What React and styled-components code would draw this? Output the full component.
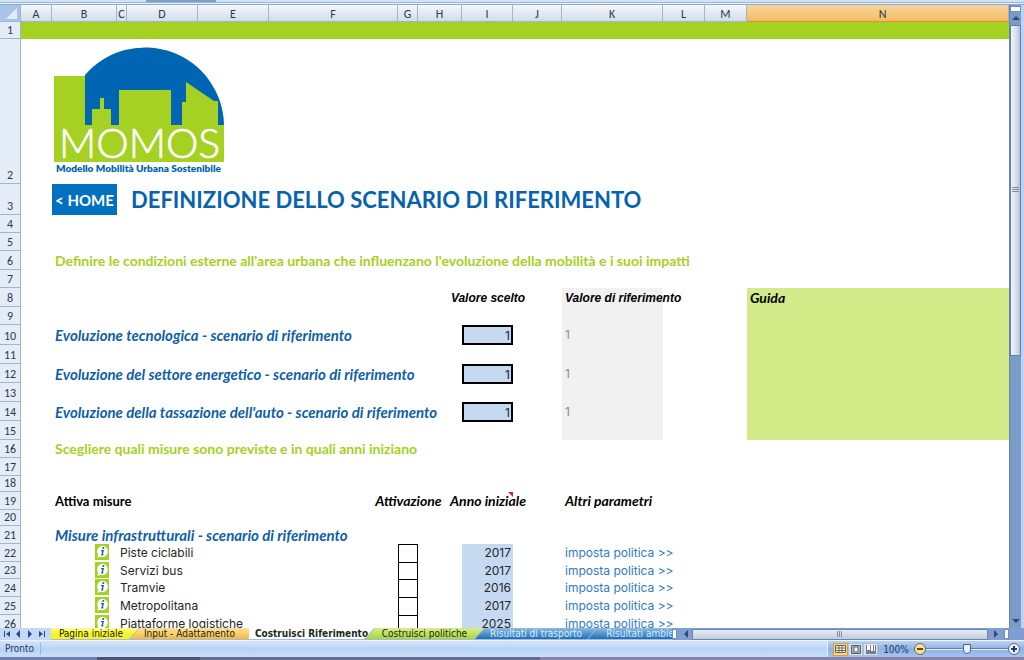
import React from "react";
import styled, { createGlobalStyle, css } from "styled-components";

const GlobalStyle = createGlobalStyle`
  *, *::before, *::after { box-sizing: border-box; }
  body { margin: 0; background: #fff; }
  button, input { font: inherit; margin: 0; padding: 0; border: 0; }
`;

const gothic = `"Century Gothic", Inter, sans-serif`;
const gothicBold = `"Century Gothic", Lato, sans-serif`;
const uiFont = `Tahoma, "DejaVu Sans Condensed", "Open Sans", sans-serif`;

const Window = styled.div`
  display: flex;
  flex-direction: column;
  height: 100vh;
  overflow: hidden;
  font-family: ${gothic};
`;

const RibbonEdge = styled.div`
  height: 5px;
  flex: none;
  padding-left: 146px;
  background: linear-gradient(#d3e3f6 0 2px, #9fb6d2 2px 3px, #e9f1fb 3px 4px, #8ea9ca 4px 5px);
`;

const RibbonMark = styled.div`
  width: 70px;
  height: 2px;
  background: #7d9fce;
`;

const Workspace = styled.main`
  display: flex;
  flex: 1;
  min-height: 0;
`;

const SheetArea = styled.div`
  flex: 1;
  min-width: 0;
  overflow: hidden;
`;

const Sheet = styled.table`
  width: 100%;
  table-layout: fixed;
  border-collapse: separate;
  border-spacing: 0;
`;

const headingFont = css`
  font-family: Calibri, Lato, sans-serif;
  font-size: 12px;
  font-weight: 400;
  color: #2c3a4c;
  line-height: 14px;
`;

const ColumnHeading = styled.th`
  ${headingFont}
  height: 17px;
  padding: 2px 0 0 ${(p) => (p.$selected ? "10px" : "0")};
  border-right: 1px solid #9eb6ce;
  border-bottom: 1px solid ${(p) => (p.$selected ? "#e0913c" : "#9eb6ce")};
  background: ${(p) =>
    p.$selected ? "linear-gradient(#f9d49c, #f1bd62)" : "linear-gradient(#f5f8fc, #d3dce9)"};
`;

const Corner = styled.td`
  height: 17px;
  padding: 1px;
  border-right: 1px solid #9eb6ce;
  border-bottom: 1px solid #9eb6ce;
  background: #a9c4e9;
  svg { display: block; margin-left: auto; }
`;

const RowHeading = styled.th`
  ${headingFont}
  height: ${(p) => p.$height}px;
  padding: 0 0 1px;
  vertical-align: bottom;
  border-right: 1px solid #9eb6ce;
  border-bottom: 1px solid #9eb6ce;
  background: #e4ecf7;
`;

const fills = { lime: "#a5d122", guide: "#d3eb89", grey: "#f1f1f1", blue: "#c5d9f1" };

const Cell = styled.td`
  position: relative;
  padding: 0;
  vertical-align: top;
  background: ${(p) => fills[p.$fill] || "transparent"};
`;

const tones = {
  body: css`font-size: 12px; color: #262626;`,
  link: css`font-size: 12px; color: #2f7bc6;`,
  faint: css`font-size: 12px; color: #8c8c8c;`,
  title: css`padding-left: 4px; font-family: ${gothicBold}; font-size: 22px; font-weight: 700; color: #0563af;`,
  lime: css`font-family: ${gothicBold}; font-size: 14px; font-weight: 700; color: #a5d122;`,
  topic: css`font-family: ${gothicBold}; font-size: 15px; font-weight: 700; font-style: italic; color: #0f5fa8;`,
  head: css`font-family: ${gothicBold}; font-size: 14px; font-weight: 700; font-style: italic; color: #000;`,
  headPlain: css`font-family: ${gothicBold}; font-size: 13px; font-weight: 700; color: #000;`,
  arial: css`font-family: "Liberation Sans", Arial, sans-serif; font-size: 12px; font-weight: 700; font-style: italic; color: #000;`,
};

const Content = styled.div`
  display: flex;
  align-items: center;
  justify-content: ${(p) => p.$align || "flex-start"};
  height: ${(p) => p.$height}px;
  padding: 0 2px 0 3px;
  line-height: 16px;
  white-space: nowrap;
  ${(p) => tones[p.$tone]}
`;

const PolicyLink = styled.a`
  color: inherit;
  text-decoration: none;
`;

const HomeLink = styled.a`
  display: flex;
  align-items: center;
  justify-content: center;
  height: 31px;
  background: #0070c0;
  color: #fff;
  font-family: ${gothicBold};
  font-size: 15px;
  font-weight: 700;
  white-space: nowrap;
  text-decoration: none;
`;

const ValueInput = styled.input`
  display: block;
  width: 100%;
  height: 20px;
  margin-bottom: -1px;
  padding-right: 1px;
  border: 2px solid #000;
  border-radius: 0;
  background: #c5d9f1;
  color: #1c2430;
  font-size: 12px;
  text-align: right;
`;

const YearInput = styled.input`
  width: 100%;
  background: transparent;
  color: #262626;
  text-align: right;
`;

const Tick = styled.input`
  appearance: none;
  display: block;
  width: 100%;
  height: 18px;
  margin-bottom: -1px;
  border: 1px solid #000;
  border-bottom: 0;
  border-radius: 0;
  background: #fff;
`;

const InfoButton = styled.button`
  display: block;
  width: 14px;
  height: 16px;
  margin-left: 43px;
  background: #a5d122;
  svg { display: block; }
`;

const NoteMark = styled.span`
  position: absolute;
  top: 0;
  right: 0;
  width: 5px;
  height: 5px;
  background: #e02020;
  clip-path: polygon(0 0, 100% 0, 100% 100%);
`;

const LogoFrame = styled.div`
  padding: 7px 0 0 2px;
  svg { display: block; }
`;

const VerticalBar = styled.div`
  display: flex;
  flex-direction: column;
  flex: none;
  width: 15px;
  padding: 1px 0 0;
  border-left: 1px solid #6786b3;
  border-right: 3px solid #bdd3f3;
  background: #7b9bc9;
`;

const Splitter = styled.div`
  flex: none;
  width: ${(p) => (p.$upright ? "5px" : "auto")};
  height: ${(p) => (p.$upright ? "10px" : "6px")};
  border: 1px solid #6f8fbd;
  background: #fff;
`;

const ArrowButton = styled.button`
  display: flex;
  align-items: center;
  justify-content: center;
  flex: none;
  width: ${(p) => p.$width || 11}px;
  height: ${(p) => p.$height || 12}px;
  background: transparent;
`;

const VerticalThumb = styled.div`
  display: flex;
  align-items: center;
  justify-content: center;
  flex: 330 1 0;
  border: 1px solid #5f7fae;
  background: linear-gradient(90deg, #f0f4fa, #dbe3ef 50%, #b6c3d8);
`;

const VerticalTrack = styled.div`
  flex: 259 1 0;
`;

const BottomBar = styled.div`
  display: flex;
  align-items: center;
  flex: none;
  height: 12px;
  padding-right: 15px;
  background: #7f9fce;
`;

const TabArea = styled.div`
  display: flex;
  flex: 675 1 0;
  min-width: 0;
  height: 12px;
  overflow: hidden;
  background: #9dbbe6;
`;

const TabArrows = styled.div`
  display: flex;
  flex: none;
  justify-content: space-between;
  width: 51px;
  padding: 0 4px 0 2px;
  background: #c3d9f6;
`;

const tabShapes = {
  first: "polygon(0 0, 100% 0, calc(100% - 10px) 100%, 0 100%)",
  beforeActive: "polygon(10px 0, 100% 0, 100% 100%, 0 100%)",
  middle: "polygon(10px 0, 100% 0, calc(100% - 10px) 100%, 0 100%)",
};

const Tab = styled.button`
  flex: none;
  width: ${(p) => p.$width}px;
  height: 11px;
  margin-left: ${(p) => (p.$shape === "first" ? 0 : -9)}px;
  padding-right: ${(p) => (p.$shape === "first" && !p.$active ? 8 : 0)}px;
  background: ${(p) => p.$fill};
  color: ${(p) => p.$color || "#1d2a16"};
  font-family: ${uiFont};
  font-size: 10px;
  font-weight: ${(p) => (p.$active ? 700 : 400)};
  line-height: 11px;
  white-space: nowrap;
  clip-path: ${(p) => tabShapes[p.$shape]};
`;

const HorizontalBar = styled.div`
  display: flex;
  align-items: center;
  flex: 329 1 0;
  height: 12px;
  padding-left: 4px;
`;

const HorizontalThumb = styled.div`
  display: flex;
  align-items: center;
  justify-content: center;
  flex: 1;
  height: 11px;
  border: 1px solid #6a86b0;
  background: linear-gradient(#e7edf6, #c0cbdc);
`;

const StatusBar = styled.footer`
  display: flex;
  align-items: center;
  flex: none;
  height: 17px;
  border-top: 1px solid #eef5fe;
  background: linear-gradient(#d4e5fa, #b9d3f5 50%, #c9def8);
  color: #1f3a6e;
  font-family: ${uiFont};
  font-size: 10px;
`;

const Ready = styled.span`
  width: 41px;
  padding-left: 5px;
  line-height: 12px;
  border-right: 1px solid #9bb7dd;
`;

const ViewTools = styled.div`
  display: flex;
  align-items: center;
  height: 100%;
  margin-left: auto;
  padding: 0 4px 0 5px;
  border-left: 1px solid #e6f0fd;
  background: linear-gradient(#bdd3f2, #8fb1e2 50%, #a5c3ec);
`;

const ViewButton = styled.button`
  display: flex;
  align-items: center;
  justify-content: center;
  width: 15px;
  height: 13px;
  border: 1px solid ${(p) => (p.$on ? "#c9a044" : "#a9bfdc")};
  background: ${(p) => (p.$on ? "#fbd978" : "#d5e2f2")};
`;

const ZoomLabel = styled.label`
  width: 36px;
  text-align: center;
`;

const RoundButton = styled.button`
  flex: none;
  width: 12px;
  height: 12px;
  border: 1px solid #54688c;
  border-radius: 50%;
  background: ${(p) => (p.$warm ? "#fbe08a" : "#eef3fa")};
  svg { display: block; }
`;

const ZoomSlider = styled.input`
  appearance: none;
  width: 82px;
  height: 12px;
  background: linear-gradient(transparent 5px, #5f7fb0 5px 6px, #e2ecfa 6px 7px, transparent 7px);
  &::-webkit-slider-thumb {
    appearance: none;
    width: 8px;
    height: 10px;
    border: 1px solid #4a6492;
    border-radius: 1px 1px 4px 4px;
    background: #e8eff9;
  }
`;

const TaskbarEdge = styled.div`
  flex: none;
  height: 3px;
  background: linear-gradient(90deg, #6e7fae 0 97px, #4b5474 97px 200px, #656b90 200px 540px, #8583ae 540px);
`;

function Logo() {
  return (
    <svg width="172" height="130" viewBox="54 46 172 130" role="img" aria-label="MOMOS">
      <path d="M85 125V75A79 79 0 0 1 224 125Z" fill="#0066b3" />
      <path
        fill="#a5d122"
        d="M54 76H85V125H92V109H100V98H104V109H111V125H119V90H171V125H182V102H186V82L214 101H218V125H224V162H54Z"
      />
      <text x="59" y="158" fill="#fff" stroke="#fff" strokeWidth="0.7" fontFamily="Lato" fontWeight="300" fontSize="41">MOMOS</text>
      <text x="56" y="172" fill="#0066b3" fontFamily="Lato" fontWeight="800" fontSize="10">
        Modello Mobilità Urbana Sostenibile
      </text>
    </svg>
  );
}

function InfoIcon() {
  return (
    <svg width="14" height="16" viewBox="0 0 14 16" aria-hidden="true">
      <ellipse cx="7.5" cy="7.5" rx="5.3" ry="5.8" fill="#fff" />
      <path d="M3 10L2.500 14L6 12Z" fill="#fff" />
      <circle cx="8.300" cy="4" r="1.100" fill="#1c5fae" />
      <path d="M6 6.600H8.200L7 10.800H8.300" fill="none" stroke="#1c5fae" strokeWidth="1.400" />
    </svg>
  );
}

const arrowPaths = {
  up: "M0 5L4 1L8 5Z",
  down: "M0 2L4 6L8 2Z",
  left: "M5 0V8L1 4Z",
  right: "M2 0V8L6 4Z",
  first: "M1 1H2V7H1ZM7 1V7L3 4Z",
  last: "M6 1H7V7H6ZM1 1V7L5 4Z",
};

function Arrow({ kind, size = 8 }) {
  return (
    <svg width={size} height={size} viewBox="0 0 8 8" aria-hidden="true">
      <path d={arrowPaths[kind]} fill="#2c4a80" />
    </svg>
  );
}

const columns = [
  ["A", 31], ["B", 65], ["C", 10], ["D", 71], ["E", 71], ["F", 129], ["G", 20], ["H", 44],
  ["I", 51], ["J", 49], ["K", 101], ["L", 42], ["M", 42], ["N", null],
];

const topicRow = (text) => ({
  B: { text, tone: "topic" },
  I: { value: "1", label: text },
  K: { text: "1", tone: "faint", fill: "grey" },
  N: { fill: "guide" },
});
const spacer = { K: { fill: "grey" }, N: { fill: "guide" } };
const measureRow = (name, year) => ({
  B: { info: name },
  C: { text: name, tone: "body" },
  G: { tick: name },
  I: { year, label: name, tone: "body", fill: "blue" },
  K: { link: "imposta politica >>", tone: "link" },
});

const rows = [
  [17, Object.fromEntries(columns.map(([c]) => [c, { fill: "lime" }]))],
  [145, { B: { logo: true } }],
  [31, { B: { home: true }, D: { text: "DEFINIZIONE DELLO SCENARIO DI RIFERIMENTO", tone: "title" } }],
  [18, {}],
  [18, {}],
  [19, { B: { text: "Definire le condizioni esterne all'area urbana che influenzano l'evoluzione della mobilità e i suoi impatti", tone: "lime" } }],
  [18, {}],
  [19, {
    I: { text: "Valore scelto", tone: "arial", align: "center" },
    K: { text: "Valore di riferimento", tone: "arial", fill: "grey" },
    N: { text: "Guida", tone: "head", fill: "guide" },
  }],
  [18, spacer],
  [20, topicRow("Evoluzione tecnologica - scenario di riferimento")],
  [19, spacer],
  [19, topicRow("Evoluzione del settore energetico - scenario di riferimento")],
  [19, spacer],
  [19, topicRow("Evoluzione della tassazione dell'auto - scenario di riferimento")],
  [19, spacer],
  [18, { B: { text: "Scegliere quali misure sono previste e in quali anni iniziano", tone: "lime" } }],
  [18, {}],
  [16, {}],
  [18, {
    B: { text: "Attiva misure", tone: "headPlain" },
    G: { text: "Attivazione", tone: "head", align: "center" },
    I: { text: "Anno iniziale", tone: "head", align: "center", note: true },
    K: { text: "Altri parametri", tone: "head" },
  }],
  [16, {}],
  [18, { B: { text: "Misure infrastrutturali - scenario di riferimento", tone: "topic" } }],
  [18, measureRow("Piste ciclabili", "2017")],
  [17, measureRow("Servizi bus", "2017")],
  [18, measureRow("Tramvie", "2016")],
  [18, measureRow("Metropolitana", "2017")],
  [18, measureRow("Piattaforme logistiche", "2025")],
];

function SheetCell({ cell = {}, height }) {
  if (cell.logo) return <Cell><LogoFrame><Logo /></LogoFrame></Cell>;
  if (cell.home) return <Cell><HomeLink href="#home">&lt; HOME</HomeLink></Cell>;
  if (cell.value) return <Cell><ValueInput defaultValue={cell.value} aria-label={cell.label} /></Cell>;
  if (cell.tick) return <Cell><Tick type="checkbox" aria-label={cell.tick} /></Cell>;
  if (cell.info) {
    return (
      <Cell>
        <InfoButton aria-label={`Info: ${cell.info}`}><InfoIcon /></InfoButton>
      </Cell>
    );
  }
  return (
    <Cell $fill={cell.fill}>
      {(cell.text || cell.link || cell.year) && (
        <Content $tone={cell.tone} $align={cell.align} $height={height}>
          {cell.text}
          {cell.link && <PolicyLink href="#politica">{cell.link}</PolicyLink>}
          {cell.year && <YearInput defaultValue={cell.year} aria-label={`Anno iniziale ${cell.label}`} />}
        </Content>
      )}
      {cell.note && <NoteMark />}
    </Cell>
  );
}

const blueTab = "linear-gradient(#8dbbe2, #1d6fb5)";
const tabs = [
  { name: "Pagina iniziale", width: 88, shape: "first", fill: "linear-gradient(#fdfba0, #f8f424 50%)" },
  { name: "Input - Adattamento", width: 119, shape: "beforeActive", fill: "linear-gradient(#fde0a0, #f7b93c)" },
  { name: "Costruisci Riferimento", width: 125, shape: "first", fill: "#fff", active: true },
  { name: "Costruisci politiche", width: 119, shape: "middle", fill: "linear-gradient(#d6ee8c, #a9d53a)" },
  { name: "Risultati di trasporto", width: 122, shape: "middle", fill: blueTab, color: "#d9ecfb" },
  { name: "Risultati ambientali", width: 124, shape: "middle", fill: blueTab, color: "#d9ecfb" },
];

export default function App() {
  return (
    <Window>
      <GlobalStyle />
      <RibbonEdge><RibbonMark /></RibbonEdge>
      <Workspace>
        <SheetArea>
          <Sheet>
            <colgroup>
              <col width="21" />
              {columns.map(([name, width]) => <col key={name} width={width || undefined} />)}
            </colgroup>
            <thead>
              <tr>
                <Corner>
                  <svg width="14" height="12" viewBox="0 0 14 12" aria-hidden="true">
                    <path d="M12 1V12H1Z" fill="#e3edfa" />
                  </svg>
                </Corner>
                {columns.map(([name]) => (
                  <ColumnHeading key={name} scope="col" $selected={name === "N"}>{name}</ColumnHeading>
                ))}
              </tr>
            </thead>
            <tbody>
              {rows.map(([height, cells], i) => (
                <tr key={i}>
                  <RowHeading scope="row" $height={height}>{i + 1}</RowHeading>
                  {columns.map(([name]) => <SheetCell key={name} cell={cells[name]} height={height} />)}
                </tr>
              ))}
            </tbody>
          </Sheet>
        </SheetArea>
        <VerticalBar>
          <Splitter />
          <ArrowButton aria-label="Su" $height={13}><Arrow kind="up" /></ArrowButton>
          <VerticalThumb>
            <svg width="7" height="6" viewBox="0 0 7 6" aria-hidden="true">
              <path d="M0 .5H7M0 2.500H7M0 4.500H7" stroke="#7d8ba3" />
            </svg>
          </VerticalThumb>
          <VerticalTrack />
          <ArrowButton aria-label="Giù" $height={14}><Arrow kind="down" /></ArrowButton>
        </VerticalBar>
      </Workspace>
      <BottomBar>
        <TabArea>
          <TabArrows>
            {["first", "left", "right", "last"].map((kind) => (
              <ArrowButton key={kind} aria-label={kind} $width={10}><Arrow kind={kind} /></ArrowButton>
            ))}
          </TabArrows>
          {tabs.map((t) => (
            <Tab
              key={t.name}
              $shape={t.shape}
              $width={t.width}
              $fill={t.fill}
              $color={t.color}
              $active={t.active}
            >
              {t.name}
            </Tab>
          ))}
        </TabArea>
        <Splitter $upright />
        <HorizontalBar>
          <ArrowButton aria-label="Sinistra"><Arrow kind="left" /></ArrowButton>
          <HorizontalThumb>
            <svg width="6" height="6" viewBox="0 0 6 6" aria-hidden="true">
              <path d="M.5 0V6M2.500 0V6M4.500 0V6" stroke="#7d8ba3" />
            </svg>
          </HorizontalThumb>
          <ArrowButton aria-label="Destra" $width={16}><Arrow kind="right" /></ArrowButton>
          <Splitter $upright />
        </HorizontalBar>
      </BottomBar>
      <StatusBar>
        <Ready>Pronto</Ready>
        <ViewTools>
          <ViewButton $on aria-label="Normale">
            <svg width="11" height="8" viewBox="0 0 11 8"><path d="M.5 .5H10.500V7.500H.5ZM.5 3H10.500M.5 5.500H10.500M4 .5V7.500M7 .5V7.500" fill="#fff" stroke="#6b6350" /></svg>
          </ViewButton>
          <ViewButton aria-label="Layout di pagina">
            <svg width="10" height="9" viewBox="0 0 10 9"><path d="M.5 .5H9.500V8.500H.5Z" fill="#aab4c4" stroke="#5c6470" /><path d="M3 2H7V7H3Z" fill="#fff" stroke="#5c6470" /></svg>
          </ViewButton>
          <ViewButton aria-label="Anteprima interruzioni">
            <svg width="10" height="9" viewBox="0 0 10 9"><path d="M0 0H10V9H0Z" fill="#767e8c" /><path d="M1 0H4V5H1ZM5 0H7V6H5ZM8 0H9V6H8Z" fill="#fff" /></svg>
          </ViewButton>
          <ZoomLabel htmlFor="zoom">100%</ZoomLabel>
          <RoundButton $warm aria-label="Riduci">
            <svg width="10" height="10" viewBox="0 0 10 10"><path d="M2 5H8" stroke="#5a4a20" strokeWidth="2" /></svg>
          </RoundButton>
          <ZoomSlider id="zoom" type="range" min="0" max="200" defaultValue="100" />
          <RoundButton aria-label="Ingrandisci">
            <svg width="10" height="10" viewBox="0 0 10 10"><path d="M2 5H8M5 2V8" stroke="#2a3c5c" strokeWidth="2" /></svg>
          </RoundButton>
        </ViewTools>
      </StatusBar>
      <TaskbarEdge />
    </Window>
  );
}
